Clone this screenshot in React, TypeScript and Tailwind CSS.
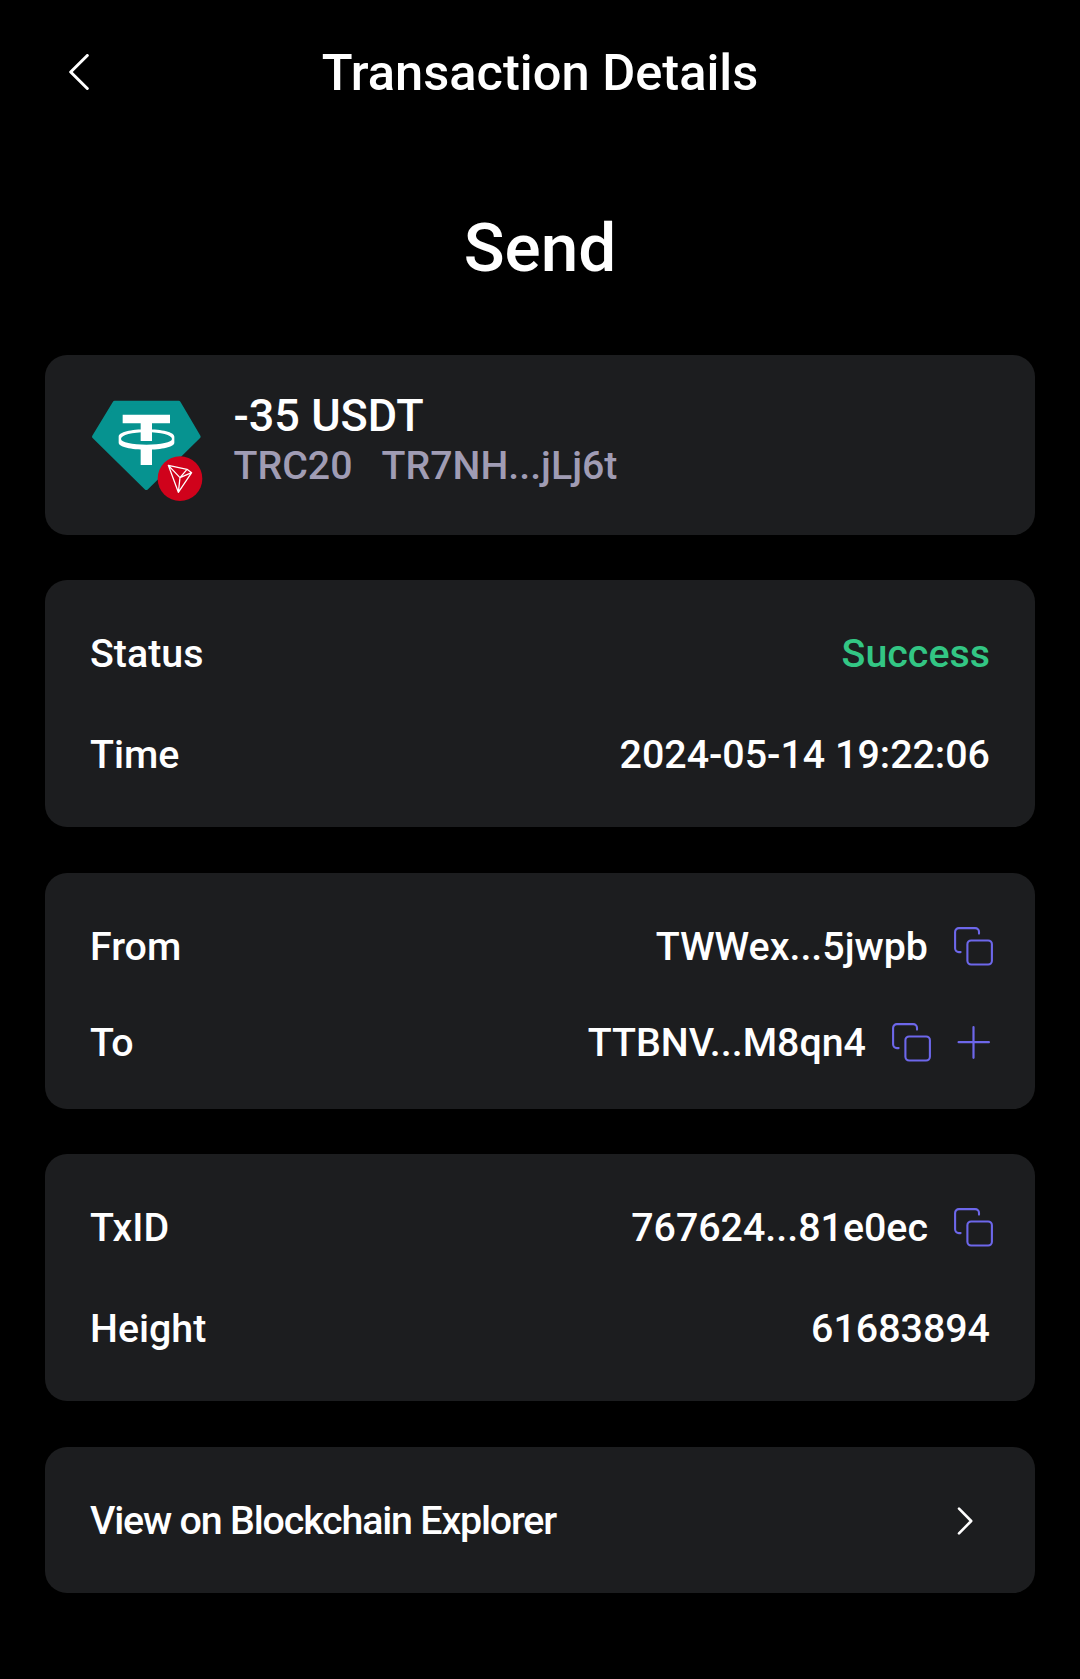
import type { ReactNode } from "react";

function ChevronLeft() {
  return (
    <svg className="-mt-[2px] h-[36px] w-[20px]" viewBox="0 0 20 36" fill="none" stroke="#fff" strokeWidth="3" strokeLinecap="round" strokeLinejoin="round">
      <path d="M18.3 1.5 1.7 18l16.6 16.5" />
    </svg>
  );
}

function ChevronRight() {
  return (
    <svg className="h-[28px] w-[16px]" viewBox="0 0 16 28" fill="none" stroke="#fff" strokeWidth="2.6" strokeLinecap="round" strokeLinejoin="round">
      <path d="M2 1.6 14.2 14 2 26.4" />
    </svg>
  );
}

function CopyIcon() {
  return (
    <svg className="h-[39px] w-[39px] shrink-0" viewBox="0 0 39 39" fill="none" stroke="#6d67ea" strokeWidth="2.1" strokeLinecap="round">
      <path d="M25 6.600V4.900a3.800 3.800 0 0 0-3.800-3.800H4.900a3.800 3.800 0 0 0-3.800 3.800v16.400a3.800 3.800 0 0 0 3.800 3.800h1.700" />
      <rect x="13.4" y="13.5" width="24.5" height="24" rx="3.8" />
    </svg>
  );
}

function PlusIcon() {
  return (
    <svg className="h-[33px] w-[33px] shrink-0" viewBox="0 0 33 33" fill="none" stroke="#6d67ea" strokeWidth="2.2" strokeLinecap="round">
      <path d="M16.500 1.200v30.600M1.600 16.200h30.300" />
    </svg>
  );
}

function TokenIcon() {
  return (
    <svg className="mt-[9px] h-[102px] w-[114px] shrink-0" viewBox="180 180 342 306">
      <path
        d="M254 188H446L506 290 349 444 192 290Z"
        fill="#069390"
        stroke="#069390"
        strokeWidth="12"
        strokeLinejoin="round"
      />
      <path
        fill="#fff"
        fillRule="evenodd"
        d="M266 290C266 277 303 268 349.500 268S433 277 433 290V308C433 320 396 329 349.500 329S266 320 266 308ZM273 297C273 307 307 314 349.500 314S426 307 426 297C426 285 392 277 349.500 277S273 285 273 297Z"
      />
      <path fill="#fff" d="M278 224H420V250H366V303H332V250H278ZM332 324H366V375H332Z" />
      <circle cx="450" cy="416" r="67" fill="#d0021b" />
      <path
        d="M415 376 471 388 485 398 445 457ZM415 376 450 413 485 398M450 413 471 388M450 413 445 457"
        fill="none"
        stroke="#fff"
        strokeWidth="3.8"
        strokeLinejoin="round"
      />
    </svg>
  );
}

function Card({ className, children }: { className: string; children: ReactNode }) {
  return <section className={`rounded-[22px] bg-[#1c1d1f] px-[45px] ${className}`}>{children}</section>;
}

function Row({ label, className, children }: { label: string; className: string; children: ReactNode }) {
  return (
    <div className={`flex items-center justify-between ${className}`}>
      <span>{label}</span>
      <div className="flex items-center gap-[26px]">{children}</div>
    </div>
  );
}

export default function App() {
  return (
    <main className="min-h-[1679px] w-[1080px] bg-black font-['Roboto',sans-serif] text-[39.375px] leading-none font-medium whitespace-nowrap text-white">
      <header className="grid h-[145px] grid-cols-[1fr_auto_1fr] items-center px-[69px]">
        <ChevronLeft />
        <h1 className="pt-[2px] text-[50.6px]">Transaction Details</h1>
      </header>

      <h2 className="mb-1 flex h-[206px] items-center justify-center text-[67.5px]">Send</h2>

      <div className="flex flex-col px-[45px]">
        <Card className="flex h-[180px] items-start gap-[29.5px] pt-[36px]">
          <TokenIcon />
          <div>
            <p className="text-[45px] leading-[50px]">-35 USDT</p>
            <p className="flex gap-[29px] text-[39.3px] leading-[50px] text-[#a09cb4]">
              <span>TRC20</span>
              <span>TR7NH...jLj6t</span>
            </p>
          </div>
        </Card>

        <Card className="mt-[45px] h-[247px] pt-[23px]">
          <Row label="Status" className="h-[101px]">
            <span className="text-[#33c684]">Success</span>
          </Row>
          <Row label="Time" className="h-[101px]">
            <span>2024-05-14 19:22:06</span>
          </Row>
        </Card>

        <Card className="mt-[46px] h-[236px] pt-[25.5px]">
          <Row label="From" className="-mr-[3px] h-[96px]">
            <span>TWWex...5jwpb</span>
            <CopyIcon />
          </Row>
          <Row label="To" className="h-[96px]">
            <span>TTBNV...M8qn4</span>
            <CopyIcon />
            <PlusIcon />
          </Row>
        </Card>

        <Card className="mt-[45px] h-[247px] pt-[23px]">
          <Row label="TxID" className="-mr-[3px] h-[101px]">
            <span>767624...81e0ec</span>
            <CopyIcon />
          </Row>
          <Row label="Height" className="h-[101px]">
            <span>61683894</span>
          </Row>
        </Card>

        <Card className="mt-[46px] flex h-[146px] items-center justify-between pt-px">
          <span className="tracking-[-1.18px]">View on Blockchain Explorer</span>
          <div className="pr-[17px]">
            <ChevronRight />
          </div>
        </Card>
      </div>
    </main>
  );
}
